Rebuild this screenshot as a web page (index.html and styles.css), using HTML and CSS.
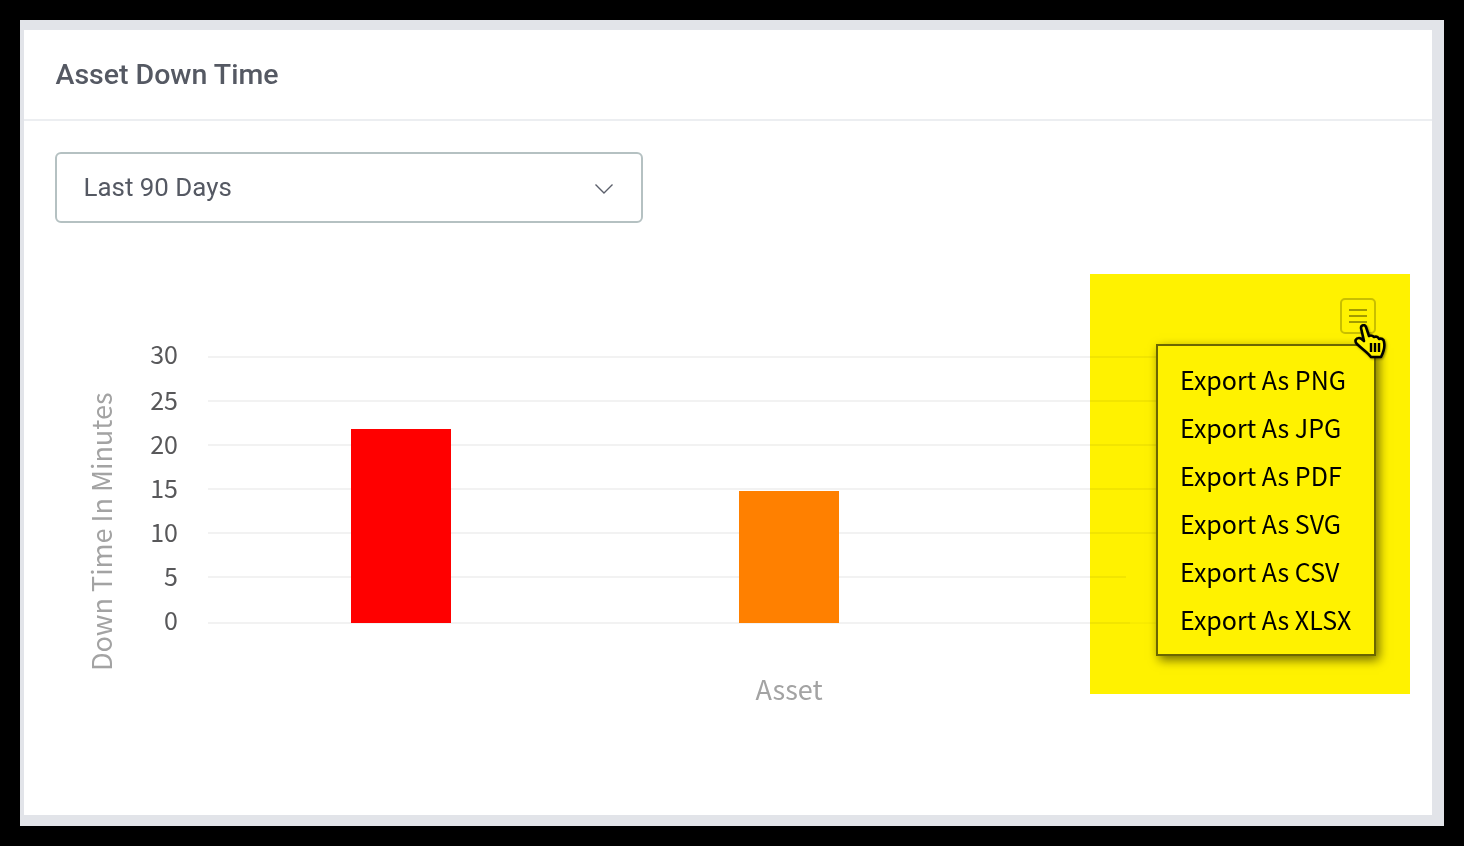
FILE: index.html
```html
<!DOCTYPE html>
<html lang="en">
<head>
    <meta charset="UTF-8">
    <meta name="viewport" content="width=device-width, initial-scale=1.0">
    <title>Asset Down Time</title>
    <link rel="stylesheet" href="styles.css">
</head>
<body>
    <div class="frame">
        <div class="card">
            <h1 class="card-title">Asset Down Time</h1>
            <div class="card-body">
                <div class="select">
                    <span class="select-label">Last 90 Days</span>
                    <svg class="chevron" width="20" height="12" viewBox="0 0 20 12">
                        <path d="M1.5 2.5 L10 11 L18.5 2.5" fill="none" stroke="#5b5f6b" stroke-width="1.4"/>
                    </svg>
                </div>

                <div class="chart">
                    <svg class="plot" width="1408" height="560" viewBox="0 0 1408 560">
                        <g class="grid">
                            <line x1="184" x2="1132" y1="104" y2="104"/>
                            <line x1="184" x2="1132" y1="148" y2="148"/>
                            <line x1="184" x2="1132" y1="192" y2="192"/>
                            <line x1="184" x2="1132" y1="236" y2="236"/>
                            <line x1="184" x2="1132" y1="280" y2="280"/>
                            <line x1="184" x2="1102" y1="324" y2="324"/>
                            <line x1="184" x2="1106" y1="370" y2="370"/>
                            <line class="thin" x1="1106" x2="1132" y1="370" y2="370"/>
                        </g>
                        <g class="ticks">
                            <text x="154" y="111">30</text>
                            <text x="154" y="157">25</text>
                            <text x="154" y="201">20</text>
                            <text x="154" y="245">15</text>
                            <text x="154" y="289">10</text>
                            <text x="154" y="333">5</text>
                            <text x="154" y="377">0</text>
                        </g>
                        <rect x="327" y="176" width="100" height="194" fill="#ff0000"/>
                        <rect x="715" y="238" width="100" height="132" fill="#ff8000"/>
                        <text class="axis-label" transform="translate(88 418) rotate(-90)">Down Time In Minutes</text>
                        <text class="axis-label" x="765" y="447" text-anchor="middle">Asset</text>
                    </svg>

                    <div class="highlight">
                        <div class="menu-btn">
                            <span></span><span></span><span></span>
                        </div>
                        <ul class="export-menu">
                            <li>Export As PNG</li>
                            <li>Export As JPG</li>
                            <li>Export As PDF</li>
                            <li>Export As SVG</li>
                            <li>Export As CSV</li>
                            <li>Export As XLSX</li>
                        </ul>
                        <svg class="cursor" width="34" height="36" viewBox="0 0 34 36">
                            <path d="M8 4 C8 1 12 0 13 3 L16 12 C18 11 20 12 21 13 C23 12 25 13 26 15 C28 14 31 15 31 18 C32 22 31 27 28 33 L18 33 C15 29 8 24 4 20 C1 17 3 14 6 14 C8 14 9 15 11 17 Z" fill="#fff200" stroke="#000" stroke-width="2.6" stroke-linejoin="round"/>
                            <path d="M18 19 V28 M22 19 V28 M26 19 V28" stroke="#000" stroke-width="2.4" fill="none"/>
                        </svg>
                    </div>
                </div>
            </div>
        </div>
    </div>
</body>
</html>
```

FILE: styles.css
```css
* {
    box-sizing: border-box;
}
body {
    margin: 0;
    height: 846px;
    padding: 20px;
    background: #000;
    overflow: hidden;
}
.frame {
    height: 806px;
    padding: 10px 12px 11px 4px;
    background: #e2e4e9;
}
.card {
    height: 785px;
    background: #fff;
    font-family: Roboto, Arial, sans-serif;
    color: #555963;
}
.card-title {
    margin: 0;
    height: 91px;
    padding: 28px 31.5px 0;
    border-bottom: 2px solid #eceef1;
    font-size: 28.5px;
    line-height: 34px;
    font-weight: 500;
}
.card-body {
    padding: 31px 0 0;
}
.select {
    display: flex;
    align-items: center;
    justify-content: space-between;
    width: 588px;
    height: 71px;
    margin-left: 31px;
    padding: 0 27px 0 26.5px;
    border: 2px solid #b5c1c2;
    border-radius: 6px;
    font-size: 25.9px;
}
.select-label {
    margin-bottom: 2px;
}
.chart {
    position: relative;
    height: 560px;
    margin-top: 30px;
    font-family: "Noto Sans CJK SC", "Noto Sans", sans-serif;
}
.plot {
    position: absolute;
    left: 0;
    top: 0;
}
.grid line {
    stroke: #f2f2f2;
    stroke-width: 2;
}
.grid .thin {
    stroke-width: 1;
}
.ticks text {
    font-size: 25px;
    fill: #58585a;
    text-anchor: end;
}
.axis-label {
    font-size: 27px;
    fill: #a3a3a3;
}
.highlight {
    position: absolute;
    left: 1066px;
    top: 21px;
    width: 320px;
    height: 420px;
    background: #fff200;
    mix-blend-mode: multiply;
}
.menu-btn {
    position: absolute;
    left: 250px;
    top: 24px;
    display: flex;
    flex-direction: column;
    justify-content: center;
    gap: 4px;
    width: 36px;
    height: 36px;
    padding: 0 7px;
    border: 2px solid #c9bf00;
    border-radius: 5px;
}
.menu-btn span {
    height: 2px;
    background: #a39b00;
}
.export-menu {
    position: absolute;
    left: 66px;
    top: 70px;
    width: 220px;
    height: 312px;
    margin: 0;
    padding: 9px 0 0 22px;
    list-style: none;
    border: 2px solid #6b6600;
    background: #fff200;
    box-shadow: 3px 4px 10px rgba(0, 0, 0, 0.55);
    font-size: 25px;
    line-height: 48px;
    color: #000;
}
.cursor {
    position: absolute;
    left: 263px;
    top: 50px;
    filter: drop-shadow(1px 1px 1px rgba(0, 0, 0, 0.4));
}
```
